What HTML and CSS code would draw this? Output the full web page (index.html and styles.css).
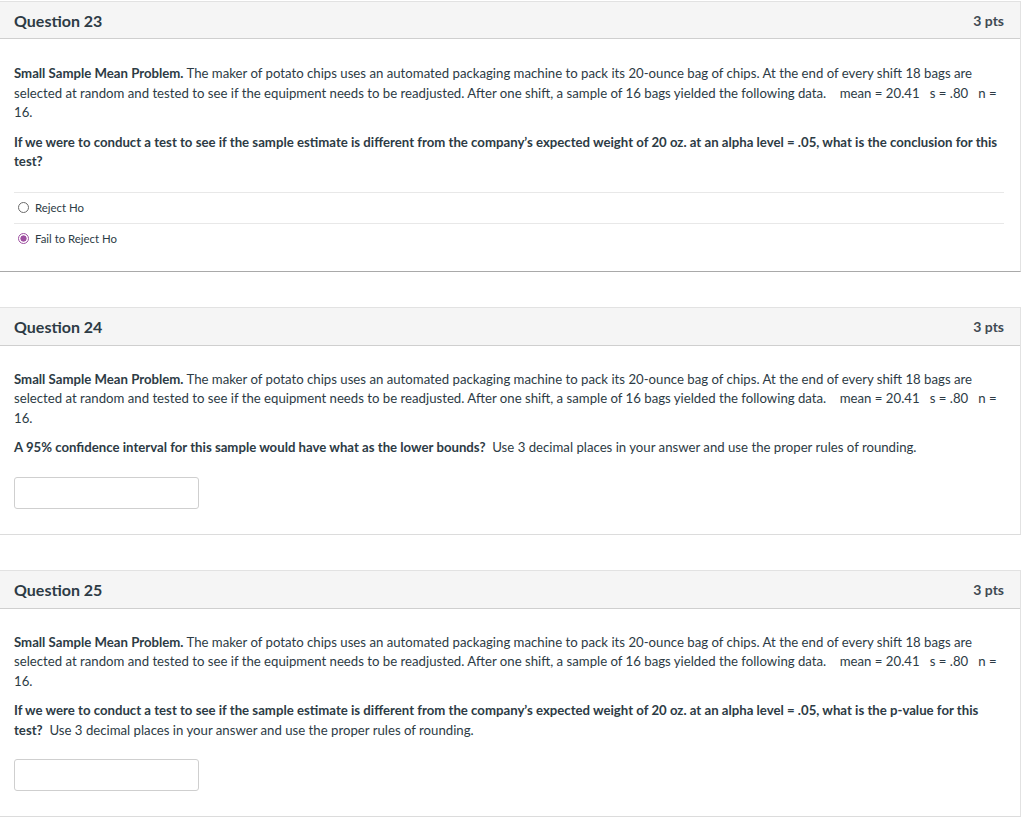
FILE: index.html
```html
<!DOCTYPE html>
<html lang="en">
<head>
<meta charset="utf-8">
<title>Quiz</title>
<link rel="stylesheet" href="styles.css">
</head>
<body>
<div class="quiz">
  <div class="question answered">
    <div class="q-header q-header-first"><span class="q-title">Question 23</span><span class="q-pts">3 pts</span></div>
    <div class="q-body q-body-choice">
      <p><strong>Small Sample Mean Problem.</strong> The maker of potato chips uses an automated packaging machine to pack its 20-ounce bag of chips. At the end of every shift 18 bags are selected at random and tested to see if the equipment needs to be readjusted. After one shift, a sample of 16 bags yielded the following data.&nbsp;&nbsp;&nbsp; mean = 20.41&nbsp;&nbsp; s = .80&nbsp;&nbsp; n = 16.</p>
      <p><strong>If we were to conduct a test to see if the sample estimate is different from the company’s expected weight of 20 oz. at an alpha level = .05, what is the conclusion for this test?</strong></p>
      <div class="answers">
        <div class="answer"><span class="radio"></span><span class="answer-text">Reject Ho</span></div>
        <div class="answer"><span class="radio checked"></span><span class="answer-text">Fail to Reject Ho</span></div>
      </div>
    </div>
  </div>

  <div class="question">
    <div class="q-header"><span class="q-title">Question 24</span><span class="q-pts">3 pts</span></div>
    <div class="q-body">
      <p><strong>Small Sample Mean Problem.</strong> The maker of potato chips uses an automated packaging machine to pack its 20-ounce bag of chips. At the end of every shift 18 bags are selected at random and tested to see if the equipment needs to be readjusted. After one shift, a sample of 16 bags yielded the following data.&nbsp;&nbsp;&nbsp; mean = 20.41&nbsp;&nbsp; s = .80&nbsp;&nbsp; n = 16.</p>
      <p><strong>A 95% confidence interval for this sample would have what as the lower bounds?</strong>&nbsp; Use 3 decimal places in your answer and use the proper rules of rounding.</p>
      <div class="input-row"><input class="answer-input" type="text" aria-label="Answer"></div>
    </div>
  </div>

  <div class="question">
    <div class="q-header"><span class="q-title">Question 25</span><span class="q-pts">3 pts</span></div>
    <div class="q-body">
      <p><strong>Small Sample Mean Problem.</strong> The maker of potato chips uses an automated packaging machine to pack its 20-ounce bag of chips. At the end of every shift 18 bags are selected at random and tested to see if the equipment needs to be readjusted. After one shift, a sample of 16 bags yielded the following data.&nbsp;&nbsp;&nbsp; mean = 20.41&nbsp;&nbsp; s = .80&nbsp;&nbsp; n = 16.</p>
      <p><strong>If we were to conduct a test to see if the sample estimate is different from the company’s expected weight of 20 oz. at an alpha level = .05, what is the p-value for this test?</strong>&nbsp; Use 3 decimal places in your answer and use the proper rules of rounding.</p>
      <div class="input-row"><input class="answer-input" type="text" aria-label="Answer"></div>
    </div>
  </div>
</div>
</body>
</html>
```

FILE: styles.css
```css
html, body {
  margin: 0;
  padding: 0;
  background: #ffffff;
}

body {
  font-family: Lato, "Open Sans", sans-serif;
  color: #2d3b45;
}

.quiz {
  width: 1021px;
  padding-top: 1px;
  display: flex;
  flex-direction: column;
  gap: 35px;
}

.question {
  border-top: 1px solid #e2e2e2;
  border-right: 1px solid #e2e2e2;
  border-bottom: 1px solid #dcdcdc;
}

.question.answered {
  border-bottom: 1px solid #a9a9a9;
}

.q-header {
  display: flex;
  justify-content: space-between;
  align-items: center;
  height: 37px;
  padding: 0 16px 0 14px;
  background: #f5f5f5;
  border-bottom: 1px solid #cfcfcf;
}

.q-header-first {
  height: 36px;
}

.q-title {
  font-size: 16px;
  font-weight: 700;
}

.q-pts {
  font-size: 14px;
  font-weight: 700;
  color: #3f4a52;
}

.q-body {
  padding: 24px 16px 25px 14px;
  font-size: 13.2px;
  line-height: 19.5px;
}

.q-body-choice {
  padding-top: 25px;
  padding-bottom: 17px;
}

.q-body p {
  margin: 0 0 10px 0;
}

.q-body strong {
  font-weight: 700;
}

.answers {
  margin-top: 20px;
}

.answer {
  display: flex;
  align-items: center;
  gap: 6px;
  height: 30px;
  padding-left: 4px;
  border-top: 1px solid #e8e8e8;
  font-size: 11.4px;
}

.answer-text {
  line-height: 30px;
}

.radio {
  box-sizing: border-box;
  width: 11px;
  height: 11px;
  border: 1px solid #6b6b6b;
  border-radius: 50%;
  background: #ffffff;
}

.radio.checked {
  border: 1px solid #9e4fa1;
  background: radial-gradient(circle, #9e4fa1 0, #9e4fa1 2.8px, #ffffff 3.4px);
}

.input-row {
  padding-top: 9px;
}

.answer-input {
  display: block;
  box-sizing: border-box;
  width: 185px;
  height: 32px;
  margin: 0;
  border: 1px solid #cfcfcf;
  border-radius: 3px;
  background: #ffffff;
  font-family: inherit;
}
```
